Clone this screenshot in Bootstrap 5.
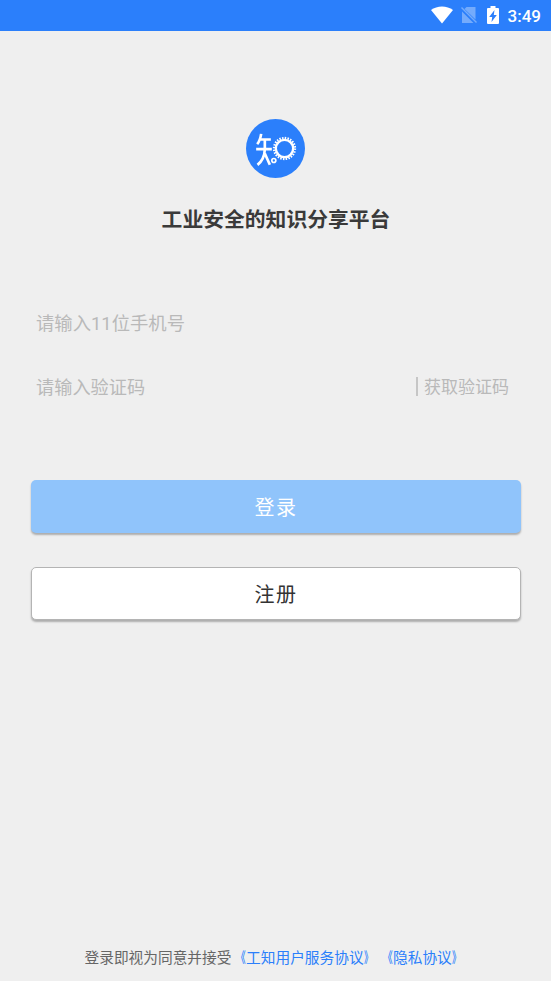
<!DOCTYPE html>
<html lang="zh-CN">
<head>
<meta charset="utf-8">
<meta name="viewport" content="width=device-width, initial-scale=1">
<title>登录</title>
<link href="https://cdn.jsdelivr.net/npm/bootstrap@5.3.0/dist/css/bootstrap.min.css" rel="stylesheet">
<style>
body{background:#efefef;font-family:Roboto,"Noto Sans CJK SC",sans-serif;color:#3a3a3a}
.status{height:30.5px;background:#2b7ffb;padding:0 10px 0 0;font-size:17px;font-weight:500;line-height:30px}
.status svg{flex:none}
.status span{padding-top:2px}
.battery{margin:0 1px 0 10px}
.logo{margin-top:88.5px;width:59px;height:59px}
.slogan{font-size:20.8px;font-weight:700;line-height:30px;margin-top:27px;padding-left:1px}
.fields{margin-top:74px;padding:0 36px}
.line-input{height:28px;font-size:18.2px;background:transparent;color:#b9b9b9}
.line-input.phone{font-size:18.35px}
.line-input::placeholder{color:#b9b9b9;opacity:1}
.code-row{margin-top:36px}
.code-link{font-size:17px;line-height:28px;color:#b9b9b9;padding-right:6px}
.code-link i{width:2px;height:19px;margin-top:-2px;background:#c6c6c6;margin-right:6px}
.actions{margin-top:79px;padding:0 30.5px}
.action{height:53px;font-size:20px;letter-spacing:1.4px;border-radius:5px;padding:2px 0 0 1px;box-shadow:0 2px 2px rgba(0,0,0,.28)}
.login,.login:hover{background:#90c4fb;color:#fff}
.register,.register:hover{background:#fff;color:#333;border:1px solid #b4b4b4;margin-top:34px}
.terms{font-size:14.7px;line-height:22px;padding-bottom:12px;color:#666;font-kerning:none;text-spacing-trim:space-all;font-feature-settings:"chws" 0,"halt" 0,"palt" 0}
.terms a{color:#2b7ffb}
.quote-open,.quote-close{display:inline-block;width:1em;line-height:1;font-weight:500}
.quote-open{transform:scaleX(.66);transform-origin:100% 50%}
.quote-close{transform:scaleX(.6);transform-origin:0 50%}
</style>
<script src="https://cdn.jsdelivr.net/npm/bootstrap@5.3.0/dist/js/bootstrap.bundle.min.js"></script>
</head>
<body>
<div class="d-flex flex-column vh-100 overflow-hidden">
  <header class="status d-flex justify-content-end align-items-center text-white">
    <svg width="22" height="18" viewBox="0 0 22 18"><path d="M0 4C6-.8 16-.8 22 4L11 17.5Z" fill="#fff"/></svg>
    <svg class="ms-2" width="16" height="18" viewBox="0 0 16 18"><path d="M5.500 1H14.500V13.500L3.500 3ZM1 5.500L12.500 17H1Z" fill="#74abfc"/><path d="M.5 1.500L15.500 16.500" stroke="#74abfc" stroke-width="1.400"/></svg>
    <svg class="battery" width="12" height="18" viewBox="0 0 12 18"><path d="M3.500 0H8.500V2H11Q12 2 12 3V17Q12 18 11 18H1Q0 18 0 17V3Q0 2 1 2H3.500Z" fill="#fff"/><path d="M7.500 4L2.200 11H5.200L4.500 16L9.800 9H6.800Z" fill="#2b7ffb"/></svg>
    <span class="ms-2">3:49</span>
  </header>
  <main class="d-flex flex-column flex-grow-1">
    <svg class="logo align-self-center" viewBox="18.5 20.5 177 177">
      <circle cx="107" cy="109" r="88.5" fill="#2b7ffb"/>
      <g fill="none" stroke="#fff">
        <path d="M64 65Q61 85 52 96M60 82H93M49 111H96M75 83V111Q74 142 53 158M75 124L90 158" stroke-width="8"/>
        <circle cx="134" cy="109" r="26" stroke-width="7"/>
        <circle cx="134" cy="109" r="31.5" stroke-width="7" pathLength="96" stroke-dasharray="2.2 1.8"/>
        <circle cx="102" cy="145" r="6" stroke-width="5"/>
      </g>
    </svg>
    <h1 class="slogan text-center mb-0">工业安全的知识分享平台</h1>
    <form class="fields">
      <input class="line-input phone form-control border-0 rounded-0 shadow-none p-0" type="tel" placeholder="请输入11位手机号">
      <div class="code-row d-flex align-items-center">
        <input class="line-input form-control border-0 rounded-0 shadow-none p-0 flex-grow-1" type="text" placeholder="请输入验证码">
        <span class="code-link d-flex align-items-center text-nowrap"><i></i>获取验证码</span>
      </div>
    </form>
    <div class="actions d-flex flex-column">
      <button class="btn action login border-0 w-100" type="button">登录</button>
      <button class="btn action register w-100" type="button">注册</button>
    </div>
    <footer class="terms mt-auto text-center text-nowrap">登录即视为同意并接受<a class="text-decoration-none" href="#"><span class="quote-open">《</span>工知用户服务协议<span class="quote-close">》</span></a><a class="text-decoration-none" href="#"><span class="quote-open">《</span>隐私协议<span class="quote-close">》</span></a></footer>
  </main>
</div>
</body>
</html>
